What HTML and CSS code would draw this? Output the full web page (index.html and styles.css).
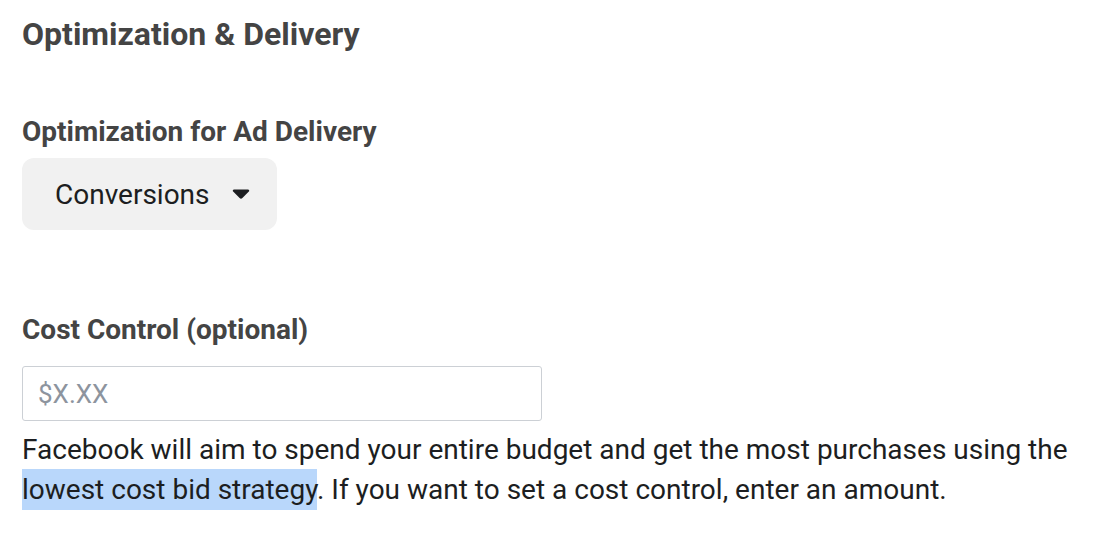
FILE: index.html
```html
<!DOCTYPE html>
<html lang="en">
<head>
  <meta charset="UTF-8" />
  <title>Optimization &amp; Delivery</title>
  <link rel="stylesheet" href="styles.css">
</head>
<body>
  <main class="panel">
    <h1>Optimization &amp; Delivery</h1>

    <section class="field">
      <label class="field-label">Optimization for Ad Delivery</label>
      <button type="button" class="dropdown">
        Conversions
        <svg class="caret" width="18" height="10" viewBox="0 0 18 10">
          <path d="M2 0.5h14a1.2 1.2 0 0 1 .85 2.05l-6.45 6.45a2 2 0 0 1-2.8 0L1.15 2.55A1.2 1.2 0 0 1 2 0.5z" fill="#1c1e21"/>
        </svg>
      </button>
    </section>

    <section class="field cost">
      <label class="field-label" for="cost">Cost Control (optional)</label>
      <input type="text" id="cost" placeholder="$X.XX" />
      <p class="help">Facebook will aim to spend your entire budget and get the most purchases using the <span class="hl">lowest cost bid strategy</span>. If you want to set a cost control, enter an amount.</p>
    </section>
  </main>
</body>
</html>
```

FILE: styles.css
```css
body {
  margin: 0;
  background: #fff;
  font-family: Roboto, "Liberation Sans", Arial, sans-serif;
  color: #1c1e21;
}
.panel {
  padding: 14px 22px;
}
h1 {
  margin: 0;
  font-size: 32px;
  line-height: 40px;
  font-weight: 700;
  color: #444;
}
.field {
  margin-top: 60px;
}
.field.cost {
  margin-top: 82px;
}
.field-label {
  display: block;
  font-size: 28px;
  line-height: 36px;
  font-weight: 700;
  color: #444;
  margin-bottom: 8px;
}
.dropdown {
  display: flex;
  align-items: center;
  gap: 22px;
  height: 72px;
  padding: 0 27px 0 33px;
  border: none;
  border-radius: 12px;
  background: #f1f1f1;
  font-family: inherit;
  font-size: 28px;
  color: #1c1e21;
}
.caret {
  display: block;
}
.cost .field-label {
  margin-bottom: 18px;
}
input {
  display: block;
  box-sizing: border-box;
  width: 520px;
  height: 55px;
  padding: 0 15px;
  border: 1px solid #ccd0d5;
  border-radius: 3px;
  font-family: inherit;
  font-size: 26px;
  color: #1c1e21;
}
input::placeholder {
  color: #8d949e;
}
.help {
  margin: 9px 0 0;
  font-size: 28px;
  line-height: 40px;
}
.hl {
  padding: 4px 0;
  background: #b9d7fb;
}
```
